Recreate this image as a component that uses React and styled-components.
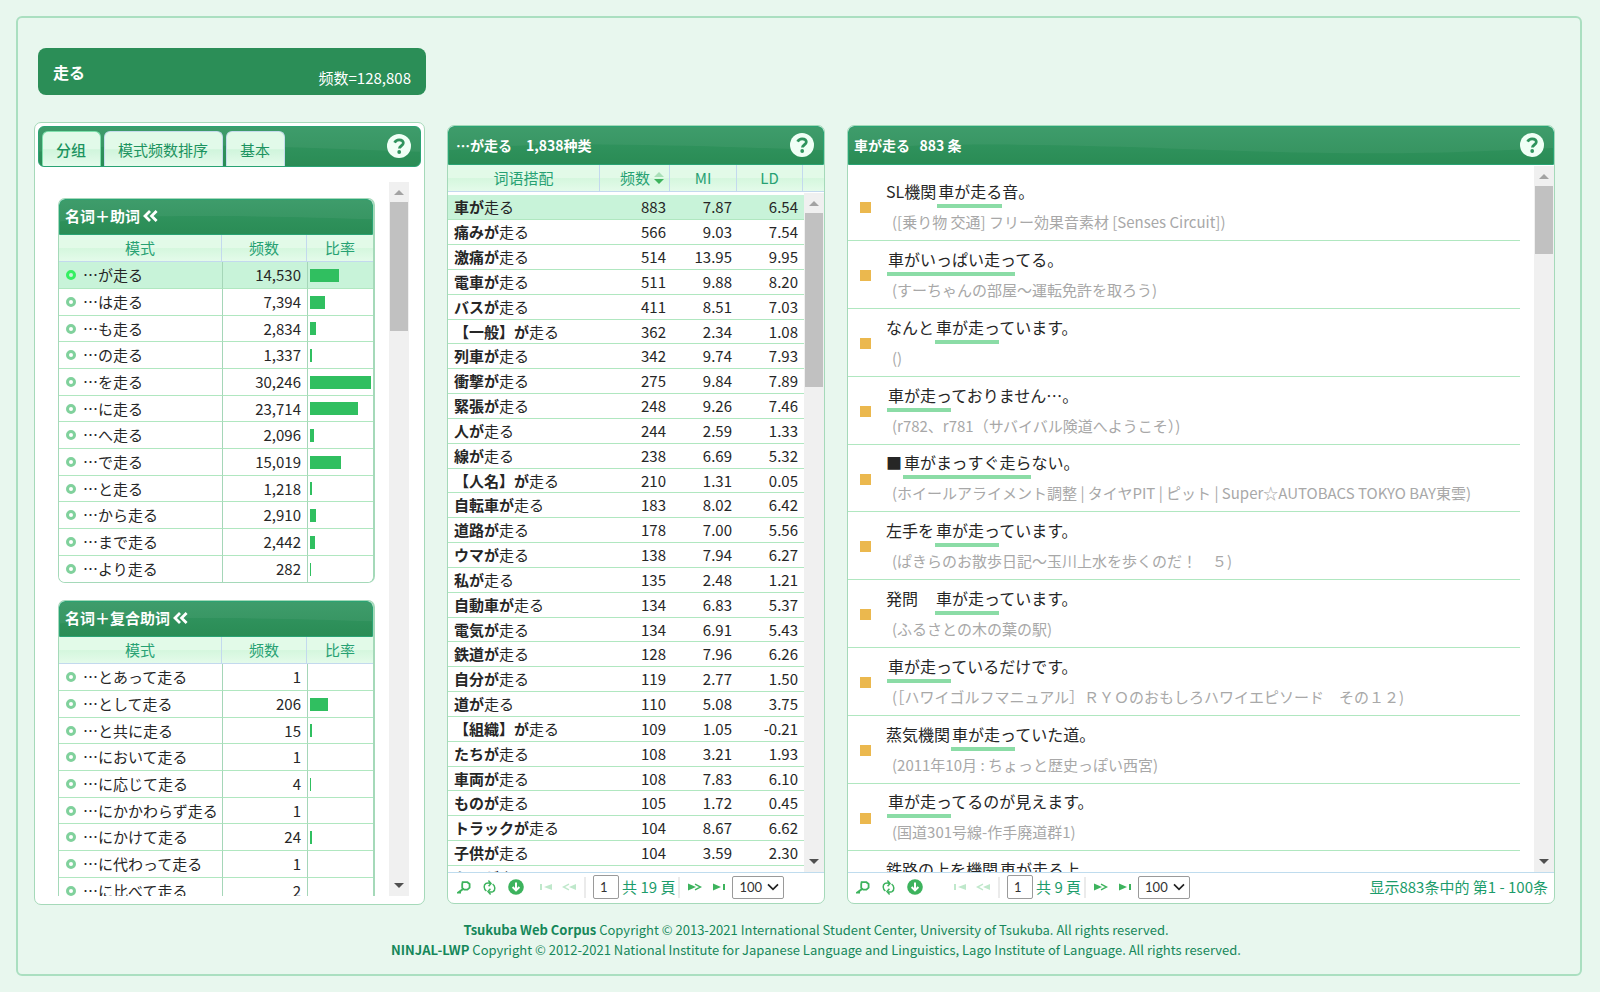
import React, { useState } from "react";
import styled, { createGlobalStyle, css } from "styled-components";

const GlobalStyle = createGlobalStyle`
  * {
    box-sizing: border-box;
  }
  body {
    margin: 0;
    background: #e8f7ee;
    color: #262626;
    font-family: "Noto Sans CJK JP", "Noto Sans CJK SC", sans-serif;
    font-size: 15px;
    line-height: 20px;
  }
  button, input, select {
    font: inherit;
    color: inherit;
  }
`;

const zh = css`
  font-family: "Noto Sans CJK SC", "Noto Sans CJK JP", sans-serif;
`;

const Page = styled.div`
  height: 100vh;
  min-height: 600px;
  padding: 16px 18px 16px 16px;
`;

const Frame = styled.div`
  display: flex;
  flex-direction: column;
  height: 100%;
  padding: 30px 25px 14px 16px;
  border: 2px solid #aadfc0;
  border-radius: 6px;
`;

const WordBar = styled.header`
  display: flex;
  justify-content: space-between;
  align-items: center;
  width: 388px;
  height: 47px;
  margin-left: 4px;
  padding: 0 15px;
  flex: none;
  background: #2b8e57;
  color: #fff;
  border-radius: 8px;
`;

const Word = styled.h1`
  margin: 0;
  font-size: 16px;
  font-weight: 700;
`;

const WordCount = styled.span`
  ${zh}
  padding-top: 12px;
`;

const Columns = styled.main`
  display: grid;
  grid-template-columns: 391px 378px minmax(0, 1fr);
  column-gap: 22px;
  flex: 1;
  min-height: 0;
  margin-top: 27px;
`;

const Panel = styled.section`
  display: flex;
  flex-direction: column;
  min-height: 0;
  min-width: 0;
  background: #fff;
  border: 1px solid #a5d9b9;
  border-radius: 7px;
  overflow: hidden;
`;

const SidePanel = styled(Panel)`
  padding: 3px 3px 8px;
`;

const GridPanel = styled(Panel)`
  margin: 3px 0 1px;
`;

const Gloss = styled.div`
  position: relative;
  display: flex;
  align-items: center;
  flex: none;
  height: ${({ $height }) => $height}px;
  padding: ${({ $padding }) => $padding || "0 6px"};
  background: linear-gradient(#349763, #2a8c55);
  border: 1px solid #2aa374;
  border-radius: ${({ $round }) => ($round ? "6px" : "6px 6px 0 0")};
  color: #fff;
  overflow: hidden;
`;

const WaveSvg = styled.svg`
  position: absolute;
  inset: 0;
  width: 1000px;
  height: 100%;
`;

const GlossTitle = styled.h2`
  position: relative;
  flex: 1;
  margin: 0;
  padding-bottom: 2px;
  font-size: ${({ $small }) => ($small ? 14 : 15)}px;
  font-weight: 700;
  white-space: pre;
`;

const ZhTitle = styled(GlossTitle)`
  ${zh}
`;

const HelpButton = styled.button`
  position: relative;
  display: flex;
  width: 24px;
  height: 24px;
  margin: 0 0 2px auto;
  padding: 0;
  border: 0;
  background: none;
  cursor: pointer;
`;

const TabList = styled.div`
  position: relative;
  display: flex;
  align-self: flex-end;
  gap: 3px;
`;

const Tab = styled.button`
  ${zh}
  height: 35px;
  padding: 2px 14px 0 13px;
  border: 1px solid ${({ $active }) => ($active ? "#7fe0ad" : "#c5dbec")};
  border-bottom: 0;
  border-radius: 6px 6px 0 0;
  background: linear-gradient(#e2fae9 50%, #d0f5dc 52%, #e6fbec);
  color: #1c9360;
  font-weight: ${({ $active }) => ($active ? 500 : 400)};
  cursor: pointer;
`;

const ScrollArea = styled.div`
  display: flex;
  flex: 1;
  min-height: 0;
  margin: ${({ $margin }) => $margin || 0};
`;

const Viewport = styled.div`
  flex: 1;
  min-width: 0;
  overflow: hidden;
  padding: ${({ $padding }) => $padding || 0};
`;

const Track = styled.div`
  display: flex;
  flex-direction: column;
  align-items: center;
  flex: none;
  width: 20px;
  background: #f0f0f0;
`;

const Arrow = styled.svg`
  flex: none;
  width: 20px;
  height: 20px;
`;

const Thumb = styled.div`
  flex: none;
  width: 18px;
  height: ${({ $size }) => $size}px;
  margin-bottom: auto;
  background: #c1c1c1;
`;

const Card = styled.div`
  margin-bottom: 17px;
  border: 1px solid #a5d9b9;
  border-right-width: 2px;
  border-radius: 7px;
  overflow: hidden;
`;

const DataTable = styled.table`
  width: 100%;
  table-layout: fixed;
  border-collapse: separate;
  border-spacing: 0;
`;

const Th = styled.th`
  ${zh}
  height: 27px;
  padding: 0;
  background: linear-gradient(#e2fae8 50%, #d5f7de 52%, #e4fbea);
  border-right: 1px solid #c3d9ee;
  border-bottom: 1px solid #c3d9ee;
  color: #27a173;
  font-weight: 400;
  &:last-child {
    border-right: 0;
  }
`;

const Td = styled.td`
  padding: 0 6px;
  border-bottom: 1px solid #b0e7c0;
  text-align: ${({ $num }) => ($num ? "right" : "left")};
  white-space: nowrap;
`;

const PatternRow = styled.tr`
  height: 27px;
  background: ${({ $active }) => ($active ? "#c8f3d9" : "#fff")};
  &:nth-child(3n) {
    height: 26px;
  }
  &:last-child ${Td} {
    border-bottom: 0;
  }
  ${Td} + ${Td} {
    border-left: 1px solid #a5d6b8;
  }
`;

const PatternCell = styled.div`
  display: flex;
  align-items: center;
  gap: 7px;
  padding-left: 1px;
`;

const Ring = styled.span`
  flex: none;
  width: 10px;
  height: 10px;
  border: 3px solid ${({ $active }) => ($active ? "#35f062" : "#80d19c")};
  border-radius: 50%;
`;

const BarCell = styled(Td)`
  padding: 0 2px;
`;

const Bar = styled.div`
  height: 13px;
  background: #30bf60;
`;

const WordRow = styled.tr`
  height: 25px;
  background: ${({ $active }) => ($active ? "#c8f3d9" : "#fff")};
  &:nth-child(6n) {
    height: 24px;
  }
`;

const SortLabel = styled.span`
  display: flex;
  align-items: center;
  justify-content: flex-end;
  gap: 4px;
  padding-right: 5px;
`;

const SentenceList = styled.ul`
  margin: 0;
  padding: 7px 0 0;
  list-style: none;
`;

const SentenceItem = styled.li`
  display: flex;
  align-items: center;
  gap: 15px;
  height: 68px;
  padding-left: 12px;
  border-bottom: 1px solid #b0e7c0;
  &:nth-child(5n) {
    height: 67px;
  }
`;

const Square = styled.span`
  flex: none;
  width: 11px;
  height: 11px;
  margin-top: 2px;
  background: #ebb84e;
`;

const SentenceBody = styled.div`
  padding-bottom: 7px;
`;

const Sentence = styled.p`
  margin: 0 0 5px;
  font-size: 16px;
  line-height: 32px;
  white-space: pre;
`;

const Hit = styled.span`
  margin-left: 1px;
  padding: 0 0 1px 1px;
  border-bottom: 4px solid #8bdca6;
`;

const Source = styled.p`
  margin: 0;
  padding-left: 6px;
  color: #a8a8a8;
  white-space: pre;
`;

const Pager = styled.div`
  display: flex;
  align-items: center;
  flex: none;
  height: 31px;
  padding: 0 6px 2px;
  border-top: 1px solid #bfdcee;
  color: #1c9c6b;
`;

const IconGroup = styled.div`
  display: flex;
  align-items: center;
  gap: ${({ $gap }) => $gap}px;
  margin-left: ${({ $left }) => $left || 0}px;
`;

const IconButton = styled.button`
  display: flex;
  padding: 0;
  border: 0;
  background: none;
  color: #3db35d;
  cursor: pointer;
  &:disabled {
    color: #bfe8cb;
    cursor: default;
  }
`;

const Divider = styled.span`
  width: 2px;
  height: 21px;
  margin: 0 7px 0 ${({ $left }) => $left || 0}px;
  background: #ebebeb;
`;

const PageLabel = styled.label`
  display: flex;
  align-items: center;
  gap: 3px;
  white-space: nowrap;
`;

const PageInput = styled.input`
  width: 26px;
  height: 24px;
  padding: 0 6px;
  border: 1px solid #9a9a9a;
  border-radius: 2px;
  background: #fff;
  color: #333;
  font-family: Lato, sans-serif;
  font-size: 13px;
`;

const SelectBox = styled.span`
  position: relative;
  display: flex;
  align-items: center;
  margin-left: 7px;
  color: #222;
`;

const PageSize = styled.select`
  appearance: none;
  width: 52px;
  height: 23px;
  padding: 0 6px;
  border: 1px solid #9a9a9a;
  border-radius: 2px;
  background: #fff;
  color: #333;
  font-family: Lato, sans-serif;
  font-size: 13px;
`;

const Chevron = styled.svg`
  position: absolute;
  right: 5px;
  pointer-events: none;
`;

const RangeText = styled.span`
  ${zh}
  margin-left: auto;
`;

const Footer = styled.footer`
  flex: none;
  padding: 15px 0 0 43px;
  color: #16875a;
  font-size: 13px;
  text-align: center;
`;

const FooterLine = styled.div`
  line-height: 20px;
`;

const caseRows = [
  ["が", "14,530", 48],
  ["は", "7,394", 24],
  ["も", "2,834", 10],
  ["の", "1,337", 4],
  ["を", "30,246", 100],
  ["に", "23,714", 78],
  ["へ", "2,096", 7],
  ["で", "15,019", 50],
  ["と", "1,218", 4],
  ["から", "2,910", 10],
  ["まで", "2,442", 8],
  ["より", "282", 1],
];

const compoundRows = [
  ["とあって", "1", 0],
  ["として", "206", 30],
  ["と共に", "15", 3],
  ["において", "1", 0],
  ["に応じて", "4", 1],
  ["にかかわらず", "1", 0],
  ["にかけて", "24", 4],
  ["に代わって", "1", 0],
  ["に比べて", "2", 0],
];

const words = [
  ["車", 883, "7.87", "6.54"],
  ["痛み", 566, "9.03", "7.54"],
  ["激痛", 514, "13.95", "9.95"],
  ["電車", 511, "9.88", "8.20"],
  ["バス", 411, "8.51", "7.03"],
  ["【一般】", 362, "2.34", "1.08"],
  ["列車", 342, "9.74", "7.93"],
  ["衝撃", 275, "9.84", "7.89"],
  ["緊張", 248, "9.26", "7.46"],
  ["人", 244, "2.59", "1.33"],
  ["線", 238, "6.69", "5.32"],
  ["【人名】", 210, "1.31", "0.05"],
  ["自転車", 183, "8.02", "6.42"],
  ["道路", 178, "7.00", "5.56"],
  ["ウマ", 138, "7.94", "6.27"],
  ["私", 135, "2.48", "1.21"],
  ["自動車", 134, "6.83", "5.37"],
  ["電気", 134, "6.91", "5.43"],
  ["鉄道", 128, "7.96", "6.26"],
  ["自分", 119, "2.77", "1.50"],
  ["道", 110, "5.08", "3.75"],
  ["【組織】", 109, "1.05", "-0.21"],
  ["たち", 108, "3.21", "1.93"],
  ["車両", 108, "7.83", "6.10"],
  ["もの", 105, "1.72", "0.45"],
  ["トラック", 104, "8.67", "6.62"],
  ["子供", 104, "3.59", "2.30"],
  ["もの", 103, "2.02", "0.88"],
];

const sentences = [
  ["SL機関", "車が走る", "音。", "([乗り物 交通] フリー効果音素材 [Senses Circuit])"],
  ["", "車がいっぱい走っ", "てる。", "(すーちゃんの部屋〜運転免許を取ろう)"],
  ["なんと", "車が走っ", "ています。", "()"],
  ["", "車が走っ", "ておりません…。", "(r782、r781（サバイバル険道へようこそ）)"],
  ["■", "車がまっすぐ走ら", "ない。", "(ホイールアライメント調整 | タイヤPIT | ピット | Super☆AUTOBACS TOKYO BAY東雲)"],
  ["左手を", "車が走っ", "ています。", "(ぱきらのお散歩日記〜玉川上水を歩くのだ！　５)"],
  ["発問　", "車が走っ", "ています。", "(ふるさとの木の葉の駅)"],
  ["", "車が走っ", "ているだけです。", "(［ハワイゴルフマニュアル］ＲＹＯのおもしろハワイエピソード　その１２)"],
  ["蒸気機関", "車が走っ", "ていた道。", "(2011年10月 : ちょっと歴史っぽい西宮)"],
  ["", "車が走っ", "てるのが見えます。", "(国道301号線-作手廃道群1)"],
  ["鉄路の上を機関", "車が走る", "上", ""],
];

const Wave = () => (
  <WaveSvg viewBox="0 0 1000 38" preserveAspectRatio="none" aria-hidden="true">
    <path
      d="M0 0V24C30 20 80 18 150 18C300 19 400 27 520 27C620 27 680 22 760 19C850 17 930 21 1000 25V0Z"
      fill="#fff"
      opacity="0.05"
    />
  </WaveSvg>
);

const Help = () => (
  <HelpButton type="button" aria-label="Help">
    <svg width="24" height="24" viewBox="0 0 24 24">
      <circle cx="12" cy="12" r="12" fill="#f0fff6" />
      <path
        d="M7.6 8.6C8.6 6.6 10.2 5.8 12.1 5.8C14.6 5.8 16.3 7.2 16.3 9.1C16.3 11.9 12.4 11.6 12.4 14.6"
        fill="none"
        stroke="#2f935d"
        strokeWidth="2.8"
      />
      <circle cx="12.2" cy="18" r="1.9" fill="#2f935d" />
    </svg>
  </HelpButton>
);

const Collapse = () => (
  <svg width="15" height="12" viewBox="0 0 15 12" aria-hidden="true">
    <path
      d="M7 1L2 6L7 11M13.6 1L8.6 6L13.6 11"
      fill="none"
      stroke="#fff"
      strokeWidth="2.8"
    />
  </svg>
);

const Scrollbar = ({ size }) => (
  <Track aria-hidden="true">
    <Arrow viewBox="0 0 20 20">
      <path d="M5 13L10 8L15 13Z" fill="#a3a3a3" />
    </Arrow>
    <Thumb $size={size} />
    <Arrow viewBox="0 0 20 20">
      <path d="M5 7L10 12L15 7Z" fill="#505050" />
    </Arrow>
  </Track>
);

const PatternGroup = ({ title, rows, selected }) => (
  <Card>
    <Gloss $height={36} $padding="0 5px">
      <Wave />
      <ZhTitle>
        {title} <Collapse />
      </ZhTitle>
    </Gloss>
    <DataTable>
      <colgroup>
        <col />
        <col style={{ width: 85 }} />
        <col style={{ width: 66 }} />
      </colgroup>
      <thead>
        <tr>
          <Th>模式</Th>
          <Th>频数</Th>
          <Th>比率</Th>
        </tr>
      </thead>
      <tbody>
        {rows.map(([particle, count, ratio]) => (
          <PatternRow key={particle} $active={particle === selected}>
            <Td>
              <PatternCell>
                <Ring $active={particle === selected} />…{particle}走る
              </PatternCell>
            </Td>
            <Td $num>{count}</Td>
            <BarCell>{ratio > 0 && <Bar style={{ width: `${ratio}%` }} />}</BarCell>
          </PatternRow>
        ))}
      </tbody>
    </DataTable>
  </Card>
);

const SearchIcon = () => (
  <svg width="14" height="13" viewBox="0 0 14 13" fill="none" stroke="currentColor">
    <path d="M5.6 1.2H10.4L12.6 3V6.6L10.4 8.6H7.2L5.2 6.8V3Z" strokeWidth="1.8" />
    <path d="M6 8L1.2 11.6H4" strokeWidth="2" />
  </svg>
);

const RefreshIcon = () => (
  <svg width="13" height="15" viewBox="0 0 13 15" fill="none" stroke="currentColor" strokeWidth="1.5">
    <path d="M3.4 11C.6 9 .4 5 3 3.4C4.2 2.8 5.6 2.8 7 3.2M5.4 .6L8 3.4L5.6 6.2" />
    <path d="M9.6 4C12.4 6 12.6 10 10 11.6C8.8 12.2 7.4 12.2 6 11.8M7.6 14.4L5 11.6L7.4 8.8" />
  </svg>
);

const DownIcon = () => (
  <svg width="16" height="16" viewBox="0 0 16 16">
    <circle cx="8" cy="8" r="7.8" fill="currentColor" />
    <path d="M8 3.6V11M4.6 8L8 11.4L11.4 8" fill="none" stroke="#fff" strokeWidth="2" />
  </svg>
);

const FirstIcon = () => (
  <svg width="12" height="8" viewBox="0 0 12 8" fill="currentColor">
    <path d="M0 1H2V7H0ZM12 1V7L4 4Z" />
  </svg>
);

const PrevIcon = () => (
  <svg width="14" height="8" viewBox="0 0 14 8">
    <path d="M14 1V7L7 4Z" fill="currentColor" />
    <path d="M7 1.2L1.4 4L7 6.8" fill="none" stroke="currentColor" strokeWidth="1.4" />
  </svg>
);

const NextIcon = () => (
  <svg width="14" height="8" viewBox="0 0 14 8">
    <path d="M0 .6V7.4L8 4Z" fill="currentColor" />
    <path d="M7 1.2L12.6 4L7 6.8" fill="none" stroke="currentColor" strokeWidth="1.4" />
  </svg>
);

const LastIcon = () => (
  <svg width="12" height="8" viewBox="0 0 12 8" fill="currentColor">
    <path d="M10 1H12V7H10ZM0 .6V7.4L8 4Z" />
  </svg>
);

const PagerBar = ({ total, offset, children }) => (
  <Pager>
    <IconGroup $gap={12} $left={offset ? 2 : 3}>
      <IconButton type="button" aria-label="Search"><SearchIcon /></IconButton>
      <IconButton type="button" aria-label="Refresh"><RefreshIcon /></IconButton>
      <IconButton type="button" aria-label="Download"><DownIcon /></IconButton>
    </IconGroup>
    <IconGroup $gap={10} $left={offset ? 31 : 16}>
      <IconButton type="button" aria-label="First page" disabled><FirstIcon /></IconButton>
      <IconButton type="button" aria-label="Previous page" disabled><PrevIcon /></IconButton>
    </IconGroup>
    <Divider $left={8} />
    <PageLabel>
      <PageInput defaultValue="1" />
      共 {total} 頁
    </PageLabel>
    <Divider $left={3} />
    <IconGroup $gap={11} $left={1}>
      <IconButton type="button" aria-label="Next page"><NextIcon /></IconButton>
      <IconButton type="button" aria-label="Last page"><LastIcon /></IconButton>
    </IconGroup>
    <SelectBox>
      <PageSize aria-label="Rows per page" defaultValue="100">
        <option>50</option>
        <option>100</option>
        <option>500</option>
      </PageSize>
      <Chevron width="12" height="8" viewBox="0 0 12 8" aria-hidden="true">
        <path d="M1 1.4L6 6.4L11 1.4" fill="none" stroke="currentColor" strokeWidth="1.7" />
      </Chevron>
    </SelectBox>
    {children}
  </Pager>
);

const tabs = ["分组", "模式频数排序", "基本"];

const App = () => {
  const [tab, setTab] = useState(tabs[0]);

  return (
    <Page>
      <GlobalStyle />
      <Frame>
        <WordBar>
          <Word>走る</Word>
          <WordCount>频数=128,808</WordCount>
        </WordBar>
        <Columns>
          <SidePanel>
            <Gloss $height={41} $padding="0 9px 0 3px" $round>
              <Wave />
              <TabList role="tablist">
                {tabs.map((name) => (
                  <Tab
                    key={name}
                    type="button"
                    role="tab"
                    aria-selected={name === tab}
                    $active={name === tab}
                    onClick={() => setTab(name)}
                  >
                    {name}
                  </Tab>
                ))}
              </TabList>
              <Help />
            </Gloss>
            <ScrollArea $margin="15px 12px 0 20px">
              <Viewport $padding="16px 14px 0 0">
                <PatternGroup title="名词＋助词" rows={caseRows} selected="が" />
                <PatternGroup title="名词＋复合助词" rows={compoundRows} />
              </Viewport>
              <Scrollbar size={129} />
            </ScrollArea>
          </SidePanel>

          <GridPanel>
            <Gloss $height={39} $padding="0 9px 0 7px">
              <Wave />
              <ZhTitle $small>…が走る　1,838种类</ZhTitle>
              <Help />
            </Gloss>
            <DataTable>
              <colgroup>
                <col />
                <col style={{ width: 70 }} />
                <col style={{ width: 67 }} />
                <col style={{ width: 66 }} />
                <col style={{ width: 21 }} />
              </colgroup>
              <thead>
                <tr>
                  <Th>词语搭配</Th>
                  <Th>
                    <SortLabel>
                      频数
                      <svg width="10" height="12" viewBox="0 0 10 12">
                        <path d="M0 5L5 0L10 5Z" fill="#a9dfb8" />
                        <path d="M0 7L5 12L10 7Z" fill="#3db35d" />
                      </svg>
                    </SortLabel>
                  </Th>
                  <Th>MI</Th>
                  <Th>LD</Th>
                  <Th aria-label="Scroll" />
                </tr>
              </thead>
            </DataTable>
            <ScrollArea $margin="1px 0 0">
              <Viewport $padding="2px 0 0">
                <DataTable>
                  <colgroup>
                    <col />
                    <col style={{ width: 70 }} />
                    <col style={{ width: 66 }} />
                    <col style={{ width: 66 }} />
                  </colgroup>
                  <tbody>
                    {words.map(([word, count, mi, ld], i) => (
                      <WordRow key={i} $active={i === 0}>
                        <Td><b>{word}が</b>走る</Td>
                        <Td $num>{count}</Td>
                        <Td $num>{mi}</Td>
                        <Td $num>{ld}</Td>
                      </WordRow>
                    ))}
                  </tbody>
                </DataTable>
              </Viewport>
              <Scrollbar size={174} />
            </ScrollArea>
            <PagerBar total={19} />
          </GridPanel>

          <GridPanel>
            <Gloss $height={39} $padding="0 9px 0 5px">
              <Wave />
              <GlossTitle $small>車が走る   883 条</GlossTitle>
              <Help />
            </Gloss>
            <ScrollArea $margin="1px 0 0">
              <Viewport $padding="0 14px 0 0">
                <SentenceList>
                  {sentences.map(([before, hit, after, source], i) => (
                    <SentenceItem key={i}>
                      <Square />
                      <SentenceBody>
                        <Sentence>
                          {before}
                          <Hit>{hit}</Hit>
                          {after}
                        </Sentence>
                        <Source>{source || " "}</Source>
                      </SentenceBody>
                    </SentenceItem>
                  ))}
                </SentenceList>
              </Viewport>
              <Scrollbar size={68} />
            </ScrollArea>
            <PagerBar total={9} offset>
              <RangeText>显示883条中的 第1 - 100条</RangeText>
            </PagerBar>
          </GridPanel>
        </Columns>
        <Footer>
          <FooterLine>
            <b>Tsukuba Web Corpus</b> Copyright © 2013-2021 International Student Center,
            University of Tsukuba. All rights reserved.
          </FooterLine>
          <FooterLine>
            <b>NINJAL-LWP</b> Copyright © 2012-2021 National Institute for Japanese Language
            and Linguistics, Lago Institute of Language. All rights reserved.
          </FooterLine>
        </Footer>
      </Frame>
    </Page>
  );
};

export default App;
